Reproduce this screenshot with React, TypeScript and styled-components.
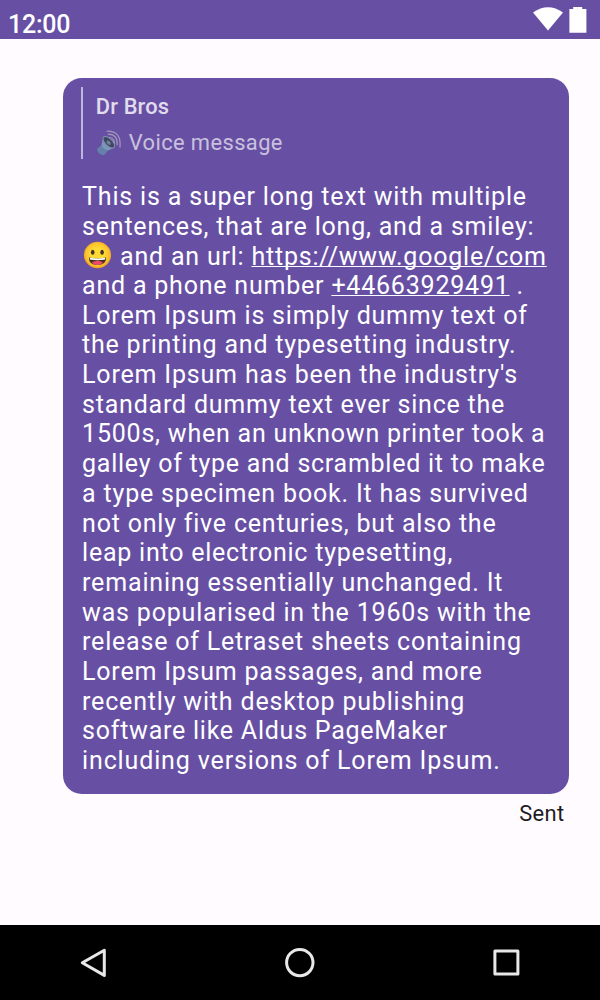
import React from "react";
import styled, { createGlobalStyle } from "styled-components";

const Global = createGlobalStyle`
  html, body { margin: 0; padding: 0; background: #fffbfe; }
  * { box-sizing: border-box; }
`;

const Screen = styled.div`
  width: 600px;
  height: 1000px;
  display: flex;
  flex-direction: column;
  overflow: hidden;
  background: #fffbfe;
  font-family: Roboto, "Liberation Sans", sans-serif;
`;

const StatusBar = styled.header`
  height: 39px;
  flex: none;
  display: flex;
  justify-content: space-between;
  padding: 6px 12px 0 8px;
  background: #6750a4;
  color: #fff;
`;

const Clock = styled.span`
  font-size: 25px;
  line-height: 38px;
  font-weight: 500;
  letter-spacing: -0.25px;
`;

const StatusIcons = styled.svg`
  width: 56px;
  height: 28px;
  display: block;
`;

const Conversation = styled.main`
  flex: 1;
  display: flex;
  flex-direction: column;
  align-items: flex-end;
  padding: 39.1px 31.25px 0 62.5px;
`;

const Bubble = styled.article`
  width: 100%;
  height: 716.4px;
  padding: 9.4px 19px 0 18.75px;
  border-radius: 18.75px;
  background: #6750a4;
  color: #fff;
`;

const Quote = styled.blockquote`
  margin: 0;
  height: 71.9px;
  padding: 5px 0 0 12.5px;
  border-left: 2px solid #c0b5da;
`;

const Author = styled.div`
  font-size: 21.875px;
  line-height: 30px;
  font-weight: 500;
  letter-spacing: 0.16px;
  color: #e1dced;
`;

const Preview = styled.div`
  display: flex;
  align-items: center;
  gap: 7px;
  height: 30px;
  margin-top: 6px;
  font-size: 21.875px;
  line-height: 30px;
  letter-spacing: 0.41px;
  color: #c9c1de;
`;

const SpeakerIcon = styled.svg`
  width: 26px;
  height: 27px;
  flex: none;
`;

const Message = styled.div`
  margin-top: 22.6px;
  padding-left: 0.8px;
  font-size: 25px;
`;

const Line = styled.div<{ $spacing?: number }>`
  height: 29.6875px;
  line-height: 29.6875px;
  white-space: pre;
  letter-spacing: ${(p) => p.$spacing ?? 0.79}px;
`;

const Link = styled.a`
  color: inherit;
  text-decoration: underline;
  text-decoration-thickness: 1.3px;
  text-underline-offset: 1.4px;
  text-decoration-skip-ink: none;
`;

const SmileyIcon = styled.svg`
  width: 30px;
  height: 28px;
  margin-right: 1px;
  vertical-align: -4px;
`;

const Delivery = styled.div`
  margin-top: 5px;
  padding-right: 4.2px;
  font-size: 21.875px;
  line-height: 30px;
  letter-spacing: 0.39px;
  color: #1c1b1f;
`;

const NavBar = styled.nav`
  height: 75px;
  flex: none;
  display: grid;
  grid-template-columns: 187px 226px 187px;
  justify-items: center;
  align-items: center;
  background: #000;
`;

const NavIcon = styled.svg`
  width: 36px;
  height: 36px;
  fill: none;
  stroke: #e8e8e8;
  stroke-width: 3;
  stroke-linejoin: round;
`;

function Speaker() {
  return (
    <SpeakerIcon viewBox="0 0 26 27" opacity="0.75">
      <path d="M1 19 5.5 15l6.5 5.5-3.5 4.3q-2 1-4.6-.8T1 19Z" fill="#6592ac" />
      <path d="M5.5 15 7.3 7.5q7.5 2 11 10.2L12 20.5Q6.5 19 5.5 15Z" fill="#82aec0" />
      <ellipse cx="12.8" cy="12.3" rx="3.6" ry="7.4" transform="rotate(-46 12.8 12.3)" fill="#34444d" stroke="#88a9b5" strokeWidth="1" />
      <ellipse cx="12.6" cy="12.7" rx="1.6" ry="2.5" transform="rotate(-46 12.6 12.7)" fill="#78909c" />
      <g fill="none" stroke="#b5b2bd" strokeWidth="1.2" strokeLinecap="round">
        <path d="M13.6 7.5q4.8.6 4.7 5.6" />
        <path d="M12.4 4.2q9.4.3 8.8 10.4" />
        <path d="M11 1.2Q25.6 1 24 17.1" />
      </g>
    </SpeakerIcon>
  );
}

function Smiley() {
  return (
    <SmileyIcon viewBox="0 0 30 28">
      <defs>
        <radialGradient id="face" cx="50%" cy="48%" r="52%">
          <stop offset="0.45" stopColor="#fddb35" />
          <stop offset="0.8" stopColor="#fbc52e" />
          <stop offset="1" stopColor="#ef9a24" />
        </radialGradient>
      </defs>
      <g transform="translate(0.5 0)">
        <ellipse cx="15" cy="14" rx="13.6" ry="13.2" fill="url(#face)" />
        <ellipse cx="10.2" cy="11.2" rx="1.8" ry="2.5" fill="#493126" />
        <ellipse cx="19.6" cy="11.2" rx="1.8" ry="2.5" fill="#493126" />
        <path d="M6.4 16.2q8.6 2.4 17.2 0 .2 7.7-8.6 7.9-8.8-.2-8.6-7.9Z" fill="#463025" />
        <path d="M9.3 21.5q5.7-3.3 11.4 0-2.2 2.5-5.7 2.6-3.5-.1-5.7-2.6Z" fill="#ef4b66" />
        <path d="M7 16.4q8 2 16 0l-.5 1.5q-.3.8-1.2.9-6.3.8-12.6 0-.9-.1-1.2-.9Z" fill="#fff" />
      </g>
    </SmileyIcon>
  );
}

const paragraph: { text: string; spacing?: number }[] = [
  { text: "Lorem Ipsum is simply dummy text of" },
  { text: "the printing and typesetting industry." },
  { text: "Lorem Ipsum has been the industry's", spacing: 0.82 },
  { text: "standard dummy text ever since the" },
  { text: "1500s, when an unknown printer took a" },
  { text: "galley of type and scrambled it to make", spacing: 0.74 },
  { text: "a type specimen book. It has survived", spacing: 0.82 },
  { text: "not only five centuries, but also the" },
  { text: "leap into electronic typesetting,", spacing: 0.77 },
  { text: "remaining essentially unchanged. It", spacing: 0.83 },
  { text: "was popularised in the 1960s with the", spacing: 0.82 },
  { text: "release of Letraset sheets containing", spacing: 0.8 },
  { text: "Lorem Ipsum passages, and more" },
  { text: "recently with desktop publishing", spacing: 0.82 },
  { text: "software like Aldus PageMaker", spacing: 0.76 },
  { text: "including versions of Lorem Ipsum.", spacing: 0.86 },
];

export default function App() {
  return (
    <Screen>
      <Global />
      <StatusBar>
        <Clock>12:00</Clock>
        <StatusIcons viewBox="532 6 56 28">
          <path d="M533 12.5Q548 2 563 12.5L548 30.6Z" fill="#fff" />
          <path d="M573.2 7h9v2h4.2v23.8h-17V9h3.8Z" fill="#fff" />
        </StatusIcons>
      </StatusBar>
      <Conversation>
        <Bubble>
          <Quote>
            <Author>Dr Bros</Author>
            <Preview>
              <Speaker />
              Voice message
            </Preview>
          </Quote>
          <Message>
            <Line $spacing={0.83}>This is a super long text with multiple</Line>
            <Line>sentences, that are long, and a smiley:</Line>
            <Line>
              <Smiley /> and an url: <Link>https://www.google/com</Link>
            </Line>
            <Line>
              and a phone number <Link>+44663929491</Link> .
            </Line>
            {paragraph.map(({ text, spacing }) => (
              <Line key={text} $spacing={spacing}>
                {text}
              </Line>
            ))}
          </Message>
        </Bubble>
        <Delivery>Sent</Delivery>
      </Conversation>
      <NavBar>
        <NavIcon viewBox="0 0 36 36">
          <path d="M6.3 17.7 28.3 5.2v25.2Z" />
        </NavIcon>
        <NavIcon viewBox="0 0 36 36">
          <circle cx="17.8" cy="17.6" r="13.2" />
        </NavIcon>
        <NavIcon viewBox="0 0 36 36">
          <rect x="5.9" y="6.1" width="23" height="23" />
        </NavIcon>
      </NavBar>
    </Screen>
  );
}
